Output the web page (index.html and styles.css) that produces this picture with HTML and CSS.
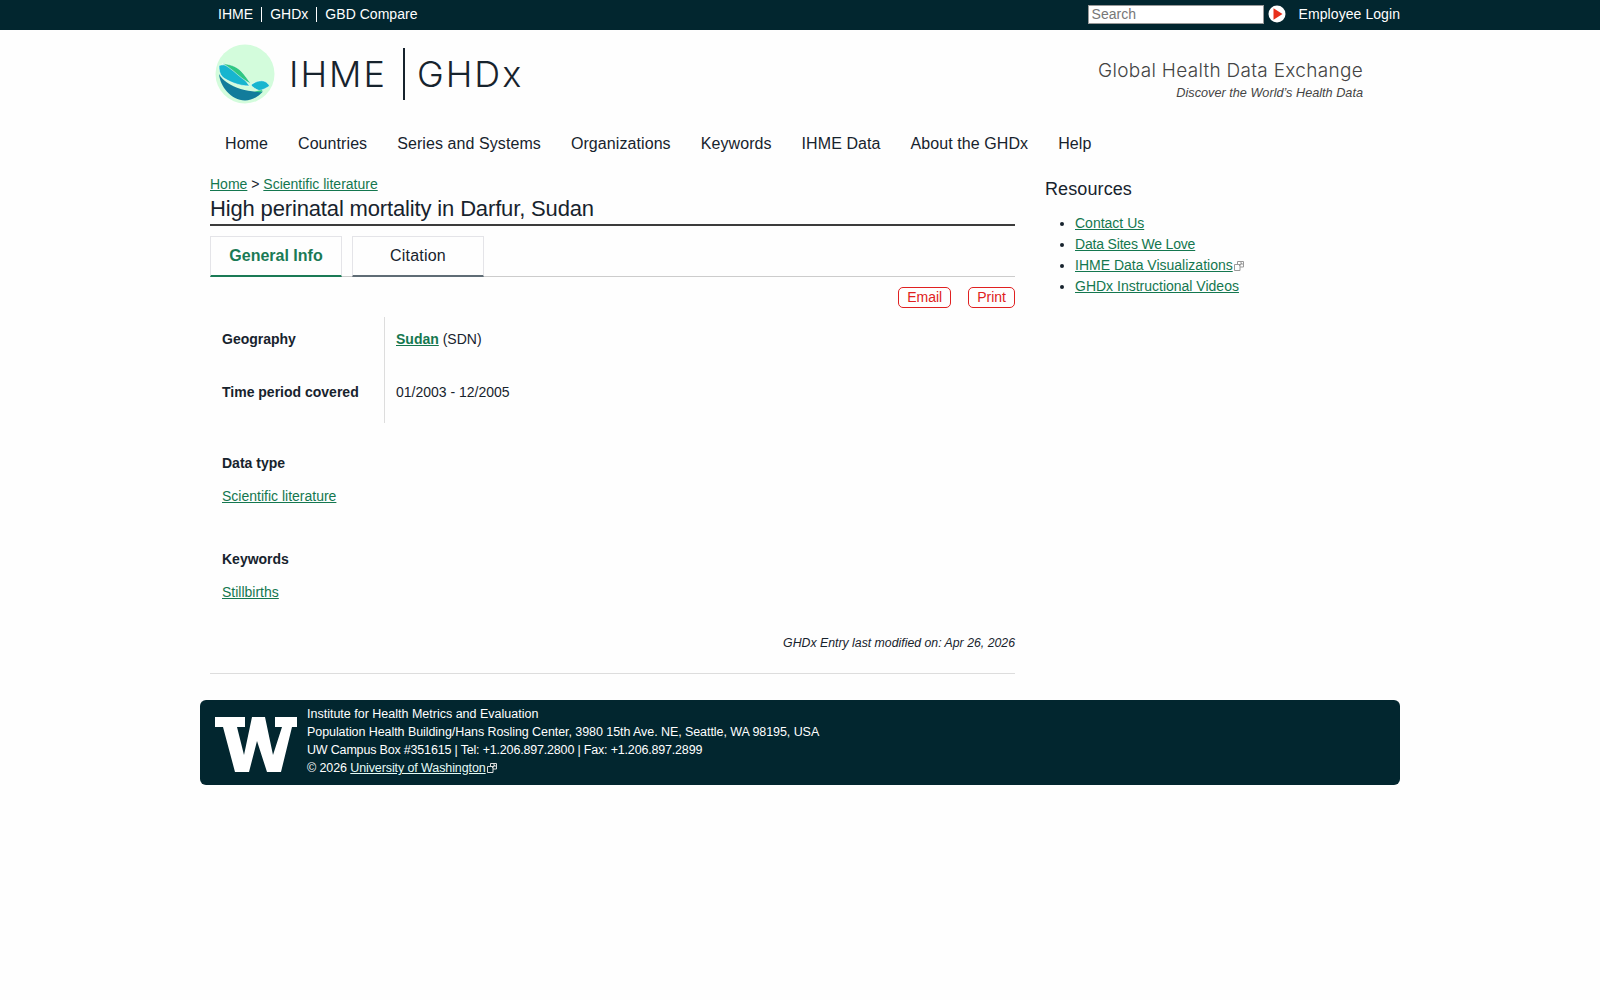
FILE: index.html
```html
<!DOCTYPE html>
<html lang="en">
<head>
<meta charset="utf-8">
<title>High perinatal mortality in Darfur, Sudan</title>
<link rel="stylesheet" href="styles.css">
</head>
<body>
<div class="topbar">
  <div class="wrap topbar-in">
    <nav class="toplinks"><a>IHME</a><a>GHDx</a><a>GBD Compare</a></nav>
    <div class="topright">
      <input class="search" placeholder="Search">
      <svg class="go" viewBox="0 0 18 18" width="18" height="18"><circle cx="9" cy="9" r="8.500" fill="#fff"/><path d="M5.500 3.200 14.500 9l-9 5.800z" fill="#e8301c"/></svg>
      <a class="login">Employee Login</a>
    </div>
  </div>
</div>
<div class="wrap">
  <header class="masthead">
    <div class="brand">
      <svg class="logo" viewBox="0 0 60 60" width="60" height="60">
        <circle cx="30" cy="30" r="29.500" fill="#d3fcdc"/>
        <path d="M4 30C5 42 16 56.500 30 56.500c7 0 13-3.500 18-9-12 1-26-2-36-9-4-3-6-5-8-8.500z" fill="#127c9b"/>
        <path d="M4 21.500c6-2 13 .5 19 5.500 4 4 7.500 10 11.500 15-11 0-22-5-27-9-3-3-3.500-7-3.500-11.500z" fill="#17b5cf" stroke="#fff" stroke-width=".5"/>
        <path d="M7 19.500c7 .5 14 2.500 19 7.500 4 4 7 9 10 13-6-3-12-8-17-12.500-4-3-8-6.500-12-8z" fill="#2fc783" stroke="#fff" stroke-width=".5"/>
        <path d="M36 41c3-3 10-5.500 14-3.500 2 1 3.500 2.500 4.500 4.500-3 2-7.500 4.500-10.500 4.500-3-1-6-3-8-5.500z" fill="#17b5cf" stroke="#fff" stroke-width=".5"/>
        <path d="M39 47.500l8.500-1.500-1.500 2.500z" fill="#2fc783"/>
      </svg>
      <span class="brand-a">IHME</span>
      <span class="brand-b">GHDx</span>
    </div>
    <div class="tagline">
      <div class="tag-main">Global Health Data Exchange</div>
      <div class="tag-sub">Discover the World’s Health Data</div>
    </div>
  </header>
  <nav class="mainnav">
    <a>Home</a><a>Countries</a><a>Series and Systems</a><a>Organizations</a><a>Keywords</a><a>IHME Data</a><a>About the GHDx</a><a>Help</a>
  </nav>
  <div class="columns">
    <main class="content">
      <div class="crumbs"><a class="lnk">Home</a> &gt; <a class="lnk">Scientific literature</a></div>
      <h1>High perinatal mortality in Darfur, Sudan</h1>
      <div class="tabs">
        <div class="tab active">General Info</div>
        <div class="tab">Citation</div>
      </div>
      <div class="actions"><a class="btn">Email</a><a class="btn">Print</a></div>
      <div class="facts">
        <div class="fact-k">Geography</div>
        <div class="fact-v"><a class="lnk strong">Sudan</a> (SDN)</div>
        <div class="fact-k">Time period covered</div>
        <div class="fact-v">01/2003 - 12/2005</div>
      </div>
      <section class="block first">
        <h4>Data type</h4>
        <p><a class="lnk">Scientific literature</a></p>
      </section>
      <section class="block">
        <h4>Keywords</h4>
        <p><a class="lnk">Stillbirths</a></p>
      </section>
      <div class="modified">GHDx Entry last modified on: Apr 26, 2026</div>
    </main>
    <aside class="side">
      <h3>Resources</h3>
      <ul>
        <li><a class="lnk">Contact Us</a></li>
        <li><a class="lnk tight">Data Sites We Love</a></li>
        <li><a class="lnk">IHME Data Visualizations</a><svg class="ext" viewBox="0 0 10 10" width="10" height="10"><path d="M.5 3.500h5.500v6H.5zM3.500 3.500V.5h6v5.500H6M5 5l3-3M6 2h2v2" fill="none" stroke="#999" stroke-width="1"/></svg></li>
        <li><a class="lnk">GHDx Instructional Videos</a></li>
      </ul>
    </aside>
  </div>
  <footer class="foot">
    <svg class="uw" viewBox="0 0 82 55" width="82" height="55"><path d="M0 0H30V10H22L29 38 37 0H50L58 38 67 10H60V0H82V10H77L66 55H52L42 24 34 55H20L8 10H0Z" fill="#fff"/></svg>
    <div class="foot-text">
      <div>Institute for Health Metrics and Evaluation</div>
      <div class="l2">Population Health Building/Hans Rosling Center, 3980 15th Ave. NE, Seattle, WA 98195, USA</div>
      <div class="l3">UW Campus Box #351615 | Tel: +1.206.897.2800 | Fax: +1.206.897.2899</div>
      <div class="l4">© 2026 <a class="foot-lnk">University of Washington</a><svg class="ext" viewBox="0 0 10 10" width="10" height="10"><path d="M.5 3.500h5.500v6H.5zM3.500 3.500V.5h6v5.500H6M5 5l3-3M6 2h2v2" fill="none" stroke="#ddd" stroke-width="1"/></svg></div>
    </div>
  </footer>
</div>
</body>
</html>
```
FILE: styles.css
```css
* { box-sizing: border-box; }
html, body { margin: 0; padding: 0; }
body { background: #fefefe; color: #17232d; font-family: "Liberation Sans", Arial, sans-serif; font-size: 14px; }
.wrap { width: 1200px; margin: 0 0 0 200px; }
.topbar { background: #02262f; height: 30px; color: #fff; }
.topbar-in { display: flex; justify-content: space-between; align-items: center; height: 30px; padding-bottom: 2px; }
.toplinks { display: flex; padding-left: 18px; }
.toplinks a { padding: 0 8px; line-height: 15px; border-left: 1px solid #fff; letter-spacing: .03px; }
.toplinks a:first-child { padding-left: 0; border-left: 0; }
.topright { display: flex; align-items: center; }
.search { width: 176px; height: 19px; border: 1px solid #999; background: #fff; padding: 0 3px; font: 14px "Liberation Sans", Arial, sans-serif; border-radius: 0; }
.search::placeholder { color: #777; opacity: 1; }
.go { margin-left: 4px; margin-right: 13px; display: block; }
.login { white-space: nowrap; letter-spacing: .07px; }
.masthead { height: 90px; display: flex; justify-content: space-between; align-items: flex-start; padding: 14px 37px 0 15px; }
.brand { display: flex; align-items: center; height: 60px; }
.logo { display: block; }
.brand-a, .brand-b { font-family: "Inter", sans-serif; font-weight: 300; font-size: 36px; line-height: 52px; letter-spacing: 2px; }
.brand-a { margin-left: 14px; padding-right: 16px; border-right: 2px solid #17232d; }
.brand-b { margin-left: 12px; }
.tagline { text-align: right; padding-top: 15px; }
.tag-main { font-family: "Inter", sans-serif; font-weight: 300; font-size: 19px; line-height: 24px; letter-spacing: .3px; color: #444; }
.tag-sub { font-style: italic; font-size: 12.700px; line-height: 20px; color: #444; }
.mainnav { display: flex; height: 50px; padding: 10px 0 0 10px; font-size: 16px; line-height: 28px; letter-spacing: .08px; }
.mainnav a { padding: 0 15px; }
.columns { display: flex; padding-left: 10px; }
.content { width: 805px; border-bottom: 1px solid #ddd; height: 504px; }
.lnk { color: #14774f; text-decoration: underline; }
.strong { font-weight: 700; }
.tight { letter-spacing: -.18px; }
.crumbs { line-height: 20px; margin-top: 4px; }
h1 { margin: 0; font-weight: 400; font-size: 22px; line-height: 30px; letter-spacing: -.15px; border-bottom: 2px solid #3c3c3c; }
.tabs { display: flex; gap: 10px; margin-top: 10px; height: 41px; border-bottom: 1px solid #ccc; }
.tab { width: 132px; height: 41px; border: 1px solid #e4e4e8; border-bottom: 2px solid #5f6c75; text-align: center; font-size: 16px; line-height: 37px; letter-spacing: .2px; }
.tab.active { color: #1a7a55; font-weight: 700; letter-spacing: 0; border-bottom-color: #1a7a55; }
.actions { display: flex; justify-content: flex-end; gap: 17px; margin-top: 10px; height: 21px; }
.btn { border: 1px solid #e02020; border-radius: 5px; color: #e02020; padding: 0 8px; line-height: 19px; }
.facts { display: grid; grid-template-columns: 175px 1fr; grid-auto-rows: 53px; margin-top: 9px; height: 106px; }
.fact-k { font-weight: 700; padding: 13px 0 0 12px; line-height: 18px; border-right: 1px solid #ddd; }
.fact-v { padding: 13px 0 0 11px; line-height: 18px; }
.block { padding-left: 12px; height: 96px; }
.block.first { margin-top: 31px; }
h4 { margin: 0; font-size: 14px; line-height: 18px; }
.block p { margin: 15px 0 0; line-height: 18px; }
.modified { text-align: right; font-style: italic; font-size: 12.300px; line-height: 18px; margin-top: -12px; }
.side { margin-left: 30px; }
h3 { margin: 6px 0 0; font-weight: 400; font-size: 18px; line-height: 26px; letter-spacing: .1px; }
.side ul { margin: 11px 0 0; padding-left: 30px; }
.side li { line-height: 21px; }
.ext { margin-left: 1px; vertical-align: -1px; }
.foot { margin-top: 26px; height: 85px; background: #02262f; border-radius: 6px; display: flex; color: #fff; font-size: 12.500px; line-height: 18px; padding: 5px 0 0 15px; }
.uw { margin: 12px 10px 0 0; display: block; }
.l2 { letter-spacing: -.07px; }
.l3 { letter-spacing: -.18px; }
.l4 { letter-spacing: -.1px; }
.foot-lnk { text-decoration: underline; color: #e4fbf6; }
```
